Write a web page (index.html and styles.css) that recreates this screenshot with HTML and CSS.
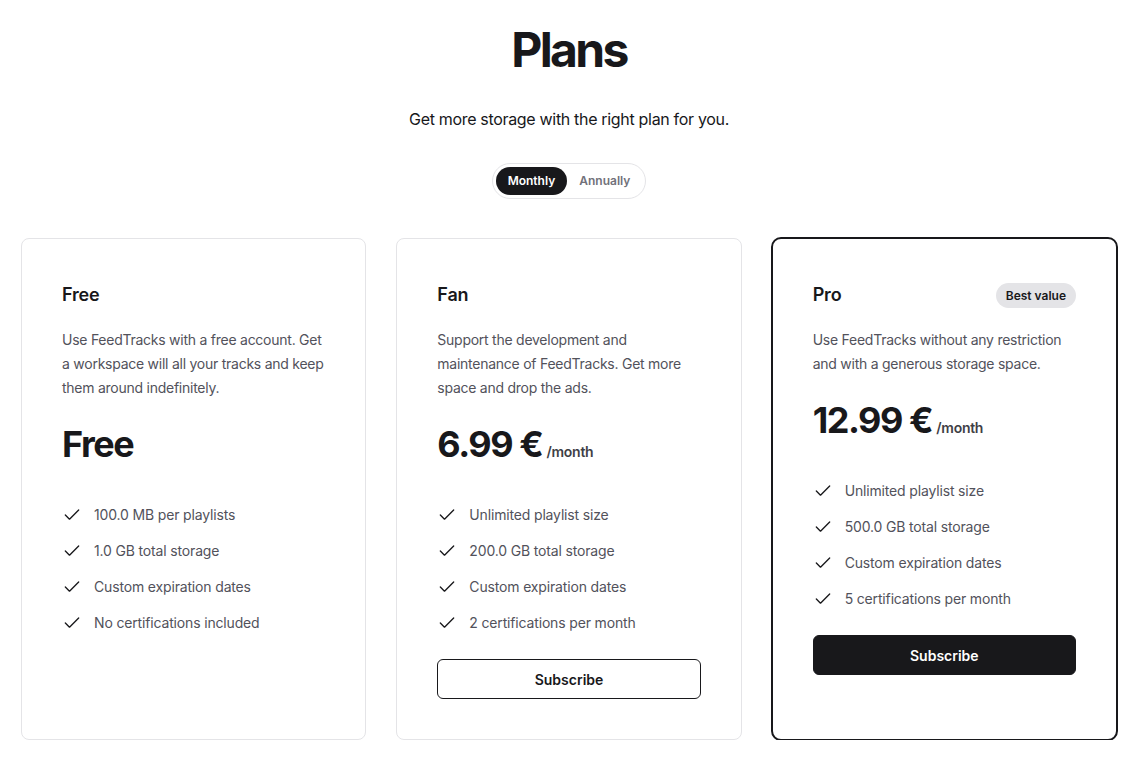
FILE: index.html
```html
<!DOCTYPE html>
<html lang="en">
<head>
<meta charset="utf-8">
<title>Plans</title>
<link rel="stylesheet" href="styles.css">
</head>
<body>
<main class="page">
  <h1 class="title">Plans</h1>
  <p class="subtitle">Get more storage with the right plan for you.</p>
  <div class="toggle">
    <span class="toggle-opt active">Monthly</span>
    <span class="toggle-opt">Annually</span>
  </div>
  <section class="plans">
    <article class="card">
      <div class="card-head"><h2 class="card-title">Free</h2></div>
      <p class="card-desc">Use FeedTracks with a free account. Get a workspace will all your tracks and keep them around indefinitely.</p>
      <div class="price"><span class="amount">Free</span></div>
      <ul class="features">
        <li><svg class="check" viewBox="0 0 24 24"><polyline points="20 6 9 17 4 12"/></svg>100.0 MB per playlists</li>
        <li><svg class="check" viewBox="0 0 24 24"><polyline points="20 6 9 17 4 12"/></svg>1.0 GB total storage</li>
        <li><svg class="check" viewBox="0 0 24 24"><polyline points="20 6 9 17 4 12"/></svg>Custom expiration dates</li>
        <li><svg class="check" viewBox="0 0 24 24"><polyline points="20 6 9 17 4 12"/></svg>No certifications included</li>
      </ul>
    </article>
    <article class="card">
      <div class="card-head"><h2 class="card-title">Fan</h2></div>
      <p class="card-desc">Support the development and maintenance of FeedTracks. Get more space and drop the ads.</p>
      <div class="price"><span class="amount">6.99 €</span><span class="per">/month</span></div>
      <ul class="features">
        <li><svg class="check" viewBox="0 0 24 24"><polyline points="20 6 9 17 4 12"/></svg>Unlimited playlist size</li>
        <li><svg class="check" viewBox="0 0 24 24"><polyline points="20 6 9 17 4 12"/></svg>200.0 GB total storage</li>
        <li><svg class="check" viewBox="0 0 24 24"><polyline points="20 6 9 17 4 12"/></svg>Custom expiration dates</li>
        <li><svg class="check" viewBox="0 0 24 24"><polyline points="20 6 9 17 4 12"/></svg>2 certifications per month</li>
      </ul>
      <button class="btn btn-outline">Subscribe</button>
    </article>
    <article class="card card-featured">
      <div class="card-head"><h2 class="card-title">Pro</h2><span class="badge">Best value</span></div>
      <p class="card-desc">Use FeedTracks without any restriction and with a generous storage space.</p>
      <div class="price"><span class="amount">12.99 €</span><span class="per">/month</span></div>
      <ul class="features">
        <li><svg class="check" viewBox="0 0 24 24"><polyline points="20 6 9 17 4 12"/></svg>Unlimited playlist size</li>
        <li><svg class="check" viewBox="0 0 24 24"><polyline points="20 6 9 17 4 12"/></svg>500.0 GB total storage</li>
        <li><svg class="check" viewBox="0 0 24 24"><polyline points="20 6 9 17 4 12"/></svg>Custom expiration dates</li>
        <li><svg class="check" viewBox="0 0 24 24"><polyline points="20 6 9 17 4 12"/></svg>5 certifications per month</li>
      </ul>
      <button class="btn btn-solid">Subscribe</button>
    </article>
  </section>
</main>
</body>
</html>
```
FILE: styles.css
```css
* { box-sizing: border-box; }
html, body { margin: 0; padding: 0; background: #ffffff; }
body {
  font-family: Inter, "Noto Sans", sans-serif;
  color: #18181b;
  letter-spacing: -0.01em;
}
.page {
  padding: 26px 11px 0 21px;
  display: flex;
  flex-direction: column;
  align-items: center;
}
.title {
  margin: 0;
  font-size: 48px;
  line-height: 48px;
  font-weight: 700;
  letter-spacing: -0.055em;
}
.subtitle {
  margin: 33px 0 0;
  font-size: 16px;
  line-height: 24px;
  letter-spacing: -0.02em;
}
.toggle {
  margin-top: 32px;
  display: flex;
  padding: 3px;
  border: 1px solid #e4e4e7;
  border-radius: 999px;
}
.toggle-opt {
  font-size: 12px;
  font-weight: 600;
  line-height: 28px;
  padding: 0 12px;
  border-radius: 999px;
  color: #71717a;
  letter-spacing: 0;
}
.toggle-opt.active {
  background: #18181b;
  color: #ffffff;
}
.plans {
  margin-top: 39px;
  width: 100%;
  display: grid;
  grid-template-columns: repeat(3, 1fr);
  gap: 30px;
}
.card {
  border: 1px solid #e4e4e7;
  border-radius: 8px;
  padding: 42px 40px 40px;
  display: flex;
  flex-direction: column;
}
.card-featured {
  border: 2px solid #18181b;
  border-radius: 10px;
  margin: -1px;
}
.card-head {
  display: flex;
  align-items: center;
  justify-content: space-between;
  height: 28px;
}
.card-title {
  margin: 0;
  font-size: 18px;
  line-height: 28px;
  font-weight: 600;
  letter-spacing: -0.01em;
}
.badge {
  background: #e4e4e7;
  font-size: 12px;
  font-weight: 600;
  line-height: 16px;
  padding: 5px 10px 4px;
  border-radius: 999px;
  letter-spacing: 0;
}
.card-desc {
  margin: 19px 0 0;
  font-size: 14px;
  line-height: 24px;
  color: #52525b;
  letter-spacing: -0.018em;
}
.price {
  margin-top: 24px;
  display: flex;
  align-items: baseline;
}
.amount {
  font-size: 36px;
  line-height: 40px;
  font-weight: 700;
  letter-spacing: -0.04em;
}
.per {
  margin-left: 4px;
  font-size: 14px;
  font-weight: 600;
  color: #3f3f46;
  letter-spacing: -0.02em;
}
.features {
  list-style: none;
  margin: 39px 0 0;
  padding: 0;
  display: flex;
  flex-direction: column;
  gap: 12px;
}
.features li {
  display: flex;
  align-items: center;
  gap: 12px;
  font-size: 14px;
  line-height: 24px;
  color: #52525b;
}
.check {
  width: 20px;
  height: 20px;
  flex: none;
  fill: none;
  stroke: #18181b;
  stroke-width: 1.6;
  stroke-linecap: round;
  stroke-linejoin: round;
}
.btn {
  margin-top: 24px;
  height: 40px;
  width: 100%;
  border-radius: 6px;
  font-family: inherit;
  font-size: 14px;
  font-weight: 600;
  letter-spacing: 0;
}
.btn-outline {
  background: #ffffff;
  border: 1px solid #18181b;
  color: #18181b;
}
.btn-solid {
  background: #18181b;
  border: 1px solid #18181b;
  color: #ffffff;
}
```
